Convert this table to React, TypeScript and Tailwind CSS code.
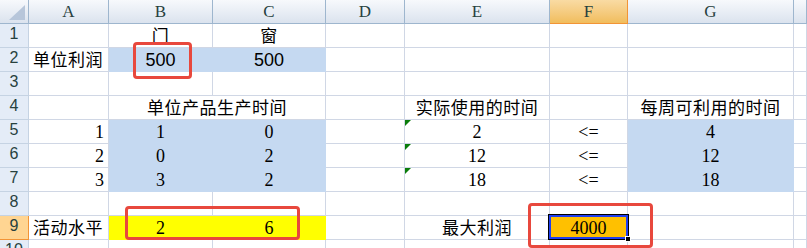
import React from "react";

const serif = "font-['Liberation_Serif','Noto_Sans_CJK_SC',serif]";
const sans = "font-['Liberation_Sans','Noto_Sans_CJK_SC',sans-serif]";

const colHeaders = ["A", "B", "C", "D", "E", "F", "G", ""];

const ColHead = ({ label, active }: { label: string; active?: boolean }) => (
  <div
    className={
      active
        ? "flex items-center justify-center border-r border-b border-[#f29436] bg-gradient-to-b from-[#f9dba3] to-[#f1bd5c] text-[17px] text-[#27413e]"
        : "flex items-center justify-center border-r border-b border-[#9eb6ce] bg-gradient-to-b from-[#f7f9fc] to-[#dbe3ee] text-[17px] text-[#27413e]"
    }
  >
    {label}
  </div>
);

const RowHead = ({ n, active }: { n: number; active?: boolean }) => (
  <div
    className={
      active
        ? `${sans} flex items-end justify-center pb-[1px] border-r border-b border-[#f29436] bg-[#ffd592] text-[16px] text-[#27413e]`
        : `${sans} flex items-end justify-center pb-[1px] border-r border-b border-[#c5d3e3] bg-[#e4ecf7] text-[16px] text-[#27413e]`
    }
  >
    {n}
  </div>
);

type CellProps = {
  children?: React.ReactNode;
  align?: "left" | "center" | "right";
  fill?: "blue" | "yellow";
  span?: boolean;
  font?: string;
  mark?: boolean;
  num?: boolean;
};

const Cell = ({ children, align = "center", fill, span, font, mark, num }: CellProps) => {
  const just =
    align === "left" ? "justify-start pl-[4px]" : align === "right" ? "justify-end pr-[4px]" : "justify-center";
  const bg =
    fill === "blue"
      ? "bg-[#c5d9f1] border-[#c5d9f1]"
      : fill === "yellow"
      ? "bg-[#ffff00] border-[#ffff00]"
      : "border-[#d0d7e5]";
  const size = num ? "text-[18px]" : "text-[17px] tracking-[0.5px]";
  return (
    <div
      className={`relative flex items-end border-r border-b leading-[21px] text-black ${size} ${just} ${bg} ${
        span ? "col-span-2" : ""
      } ${font ?? ""}`}
    >
      {mark && (
        <span className="absolute left-0 top-0 h-0 w-0 border-t-[6px] border-r-[6px] border-t-[#0a7d0a] border-r-transparent" />
      )}
      {children}
    </div>
  );
};

const RedBox = ({ className }: { className: string }) => (
  <div className={`absolute rounded-[4px] border-[3px] border-[#e8483d] ${className}`} />
);

const Blank = () => <Cell />;

export default function App() {
  return (
    <div className={`${serif} relative h-[248px] w-[807px] overflow-hidden bg-white`}>
      <div className="grid grid-cols-[29px_80px_104px_113px_79px_145px_78px_166px_13px] auto-rows-[24px]">
        {/* corner */}
        <div className="relative border-r border-b border-[#9eb6ce] bg-gradient-to-b from-[#f7f9fc] to-[#dbe3ee]">
          <svg className="absolute left-[9px] top-[5px]" width="16" height="15" viewBox="0 0 16 15">
            <polygon points="16,0 16,15 0,15" fill="#b7c6da" />
          </svg>
        </div>
        {colHeaders.map((c, i) => (
          <ColHead key={i} label={c} active={c === "F"} />
        ))}

        {/* row 1 */}
        <RowHead n={1} />
        <Blank />
        <Cell>门</Cell>
        <Cell>窗</Cell>
        <Blank />
        <Blank />
        <Blank />
        <Blank />
        <Blank />

        {/* row 2 */}
        <RowHead n={2} />
        <Cell align="left">单位利润</Cell>
        <Cell fill="blue" font={sans} num>500</Cell>
        <Cell fill="blue" font={sans} num>500</Cell>
        <Blank />
        <Blank />
        <Blank />
        <Blank />
        <Blank />

        {/* row 3 */}
        <RowHead n={3} />
        <Blank />
        <Blank />
        <Blank />
        <Blank />
        <Blank />
        <Blank />
        <Blank />
        <Blank />

        {/* row 4 */}
        <RowHead n={4} />
        <Blank />
        <Cell span>单位产品生产时间</Cell>
        <Blank />
        <Cell>实际使用的时间</Cell>
        <Blank />
        <Cell>每周可利用的时间</Cell>
        <Blank />

        {/* rows 5-7 */}
        {[
          [1, 1, 0, 2, 4],
          [2, 0, 2, 12, 12],
          [3, 3, 2, 18, 18],
        ].map((r) => (
          <React.Fragment key={r[0]}>
            <RowHead n={r[0] + 4} />
            <Cell align="right" num>{r[0]}</Cell>
            <Cell fill="blue" num>{r[1]}</Cell>
            <Cell fill="blue" num>{r[2]}</Cell>
            <Blank />
            <Cell mark num>{r[3]}</Cell>
            <Cell num>&lt;=</Cell>
            <Cell fill="blue" num>{r[4]}</Cell>
            <Blank />
          </React.Fragment>
        ))}

        {/* row 8 */}
        <RowHead n={8} />
        <Blank />
        <Blank />
        <Blank />
        <Blank />
        <Blank />
        <Blank />
        <Blank />
        <Blank />

        {/* row 9 */}
        <RowHead n={9} active />
        <Cell align="left">活动水平</Cell>
        <Cell fill="yellow" num>2</Cell>
        <Cell fill="yellow" num>6</Cell>
        <Blank />
        <Cell>最大利润</Cell>
        <div className="flex items-end justify-center border-r border-b border-[#d0d7e5] bg-[#ffc000] text-[18px] leading-[21px]">
          4000
        </div>
        <Blank />
        <Blank />

        {/* row 10 */}
        <RowHead n={10} />
        <Blank />
        <Blank />
        <Blank />
        <Blank />
        <Blank />
        <Blank />
        <Blank />
        <Blank />
      </div>

      {/* active cell F9 */}
      <div className="absolute left-[548px] top-[214px] h-[26px] w-[81px] border border-black">
        <div className="h-full w-full border-2 border-[#1f3ff0]" />
      </div>
      <div className="absolute left-[625px] top-[236px] h-[6px] w-[6px] border border-white bg-black" />

      {/* annotations */}
      <RedBox className="left-[133px] top-[42px] h-[37px] w-[59px]" />
      <RedBox className="left-[125px] top-[206px] h-[34px] w-[175px]" />
      <RedBox className="left-[528px] top-[203px] h-[45px] w-[125px]" />
    </div>
  );
}
